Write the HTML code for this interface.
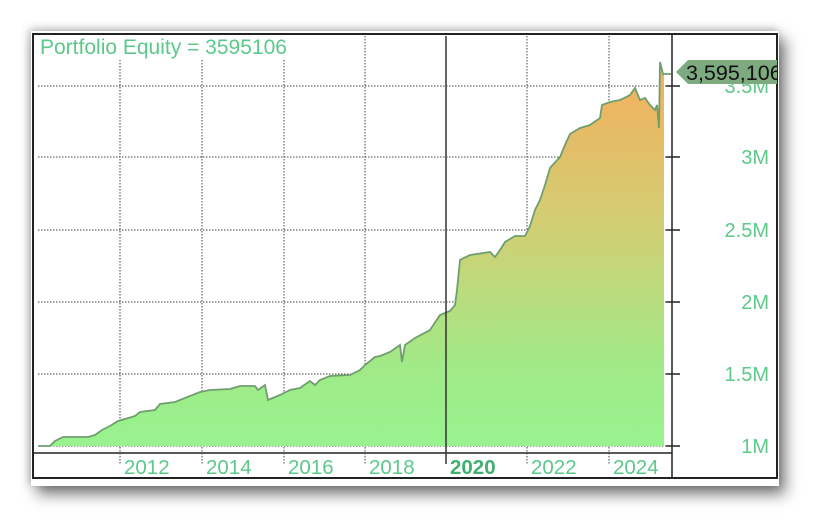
<!DOCTYPE html>
<html><head><meta charset="utf-8"><style>
html,body{margin:0;padding:0;background:#fff;width:824px;height:525px;overflow:hidden}
.frame{position:absolute;left:31px;top:31px;width:748px;height:455px;background:#fff;box-shadow:6px 8px 14px rgba(0,0,0,0.55),-2px -2px 8px rgba(0,0,0,0.25)}
svg{position:absolute;left:0;top:0}
text{font-family:"Liberation Sans",sans-serif}
</style></head><body>
<div class="frame"></div>
<svg width="824" height="525" viewBox="0 0 824 525">
<defs>
<linearGradient id="g" gradientUnits="userSpaceOnUse" x1="0" y1="446" x2="0" y2="60">
<stop offset="0" stop-color="#98f38f"/>
<stop offset="0.2" stop-color="#a0ea88"/>
<stop offset="0.55" stop-color="#cfd074"/>
<stop offset="1" stop-color="#f6ad5c"/>
</linearGradient>
<clipPath id="c"><rect x="34" y="35" width="630" height="412"/></clipPath>
<clipPath id="lab"><rect x="670" y="50" width="107" height="40"/></clipPath>
</defs>
<rect x="33" y="34" width="744" height="444" fill="none" stroke="#222" stroke-width="2"/>
<line x1="672" y1="34" x2="672" y2="478" stroke="#222" stroke-width="1.5"/>
<line x1="33" y1="453" x2="672" y2="453" stroke="#222" stroke-width="1.5"/>
<g stroke="#444" stroke-width="1" stroke-dasharray="1.5,1.5">
<line x1="38" y1="86" x2="672" y2="86"/><line x1="38" y1="157" x2="672" y2="157"/>
<line x1="38" y1="230" x2="672" y2="230"/><line x1="38" y1="302" x2="672" y2="302"/>
<line x1="38" y1="374" x2="672" y2="374"/><line x1="38" y1="446" x2="672" y2="446"/>
<line x1="120" y1="60" x2="120" y2="464"/><line x1="202" y1="60" x2="202" y2="464"/>
<line x1="284" y1="60" x2="284" y2="464"/><line x1="365" y1="36" x2="365" y2="464"/>
<line x1="527" y1="36" x2="527" y2="464"/><line x1="609" y1="36" x2="609" y2="464"/>
</g>
<path clip-path="url(#c)" fill="url(#g)" stroke="none" d="M38,446 L50,446 55,441 63,437 88,437 95,435 102,430 110,426 118,421 125,419 135,416 140,412 155,410 160,404 175,402 200,392 210,390 230,389 240,386 255,386 258,390 265,385 268,400 280,395 290,390 300,388 310,381 315,385 320,380 330,376 350,375 360,370 365,365 375,357 380,356 390,352 400,345 402,362 405,345 415,338 430,330 440,315 450,311 455,305 457,290 460,260 470,255 490,252 495,257 500,250 505,242 515,236 525,236 530,226 535,210 540,200 545,185 550,168 560,157 565,145 570,134 580,128 590,125 600,118 602,105 610,102 620,100 630,95 635,88 640,100 645,98 650,105 655,110 657,105 659,128 660,62 663,74 664,74 664,446 Z"/>
<polyline fill="none" stroke="#6f9f6f" stroke-width="1.8" points="38,446 50,446 55,441 63,437 88,437 95,435 102,430 110,426 118,421 125,419 135,416 140,412 155,410 160,404 175,402 200,392 210,390 230,389 240,386 255,386 258,390 265,385 268,400 280,395 290,390 300,388 310,381 315,385 320,380 330,376 350,375 360,370 365,365 375,357 380,356 390,352 400,345 402,362 405,345 415,338 430,330 440,315 450,311 455,305 457,290 460,260 470,255 490,252 495,257 500,250 505,242 515,236 525,236 530,226 535,210 540,200 545,185 550,168 560,157 565,145 570,134 580,128 590,125 600,118 602,105 610,102 620,100 630,95 635,88 640,100 645,98 650,105 655,110 657,105 659,128 660,62 663,74 671,74"/>
<line x1="446" y1="36" x2="446" y2="464" stroke="#333" stroke-width="1.5"/>
<g stroke="#222" stroke-width="1.5">
<line x1="666" y1="86" x2="680" y2="86"/><line x1="666" y1="157" x2="680" y2="157"/>
<line x1="666" y1="230" x2="680" y2="230"/><line x1="666" y1="302" x2="680" y2="302"/>
<line x1="666" y1="374" x2="680" y2="374"/><line x1="666" y1="446" x2="680" y2="446"/>
</g>
<g fill="#5cc98a" font-size="20" text-anchor="end">
<text x="769" y="93">3.5M</text><text x="769" y="164">3M</text><text x="769" y="237">2.5M</text>
<text x="769" y="309">2M</text><text x="769" y="381">1.5M</text><text x="769" y="453">1M</text>
</g>
<g clip-path="url(#lab)">
<path d="M676,72 L688,60 L780,60 L780,84 L688,84 Z" fill="#7eaa80"/>
<text x="686" y="80" font-size="21.5" fill="#111">3,595,106</text>
</g>
<g fill="#5cc98a" font-size="20.5">
<text x="124" y="474">2012</text><text x="206" y="474">2014</text><text x="288" y="474">2016</text>
<text x="369" y="474">2018</text><text x="450" y="474" font-weight="bold" fill="#3fb070">2020</text>
<text x="531" y="474">2022</text><text x="613" y="474">2024</text>
</g>
<text x="40" y="54" font-size="21" fill="#5cc98a">Portfolio Equity = 3595106</text>
</svg>
</body></html>
